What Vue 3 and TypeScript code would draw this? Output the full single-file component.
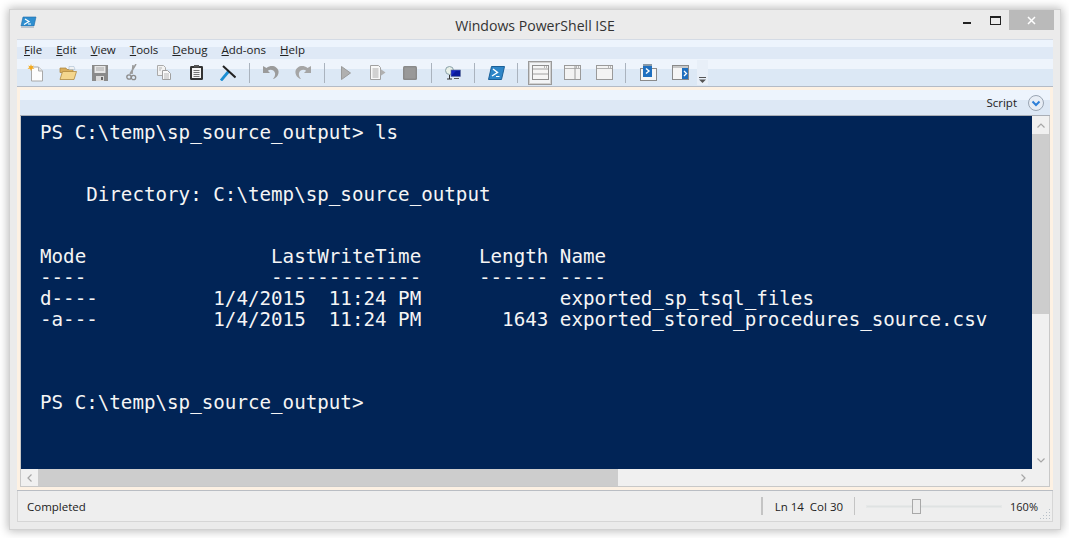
<script setup lang="ts">
const menus: { k: string; r: string }[] = [
  { k: 'F', r: 'ile' },
  { k: 'E', r: 'dit' },
  { k: 'V', r: 'iew' },
  { k: 'T', r: 'ools' },
  { k: 'D', r: 'ebug' },
  { k: 'A', r: 'dd-ons' },
  { k: 'H', r: 'elp' },
]
const consoleText = `PS C:\\temp\\sp_source_output> ls


    Directory: C:\\temp\\sp_source_output


Mode                LastWriteTime     Length Name
----                -------------     ------ ----
d----          1/4/2015  11:24 PM            exported_sp_tsql_files
-a---          1/4/2015  11:24 PM       1643 exported_stored_procedures_source.csv



PS C:\\temp\\sp_source_output>`
</script>

<template>
  <div class="page">
    <div class="window">
      <header class="titlebar">
        <svg class="app-icon" width="17" height="14" viewBox="0 0 17 14">
          <path d="M3 1h13l-2 9H1z" fill="#2f8fd0" stroke="#1c6aa8" stroke-width=".6" />
          <path d="M5 3l4 2.5-5 3" fill="none" stroke="#fff" stroke-width="1.2" />
          <path d="M8 8h3" stroke="#fff" />
          <rect x="1" y="10" width="13" height="2" fill="#b9c4cf" />
        </svg>
        <span class="title">Windows PowerShell ISE</span>
        <div class="caption">
          <span class="cap-btn"><i class="min"></i></span>
          <span class="cap-btn"><i class="max"></i></span>
          <span class="close">
            <svg width="9" height="9" viewBox="0 0 9 9"><path d="M1 1l7 7M8 1l-7 7" stroke="#fff" stroke-width="1.5" /></svg>
          </span>
        </div>
      </header>

      <div class="chrome">
        <nav class="menubar">
          <span v-for="m in menus" :key="m.k" class="menu"><u>{{ m.k }}</u>{{ m.r }}</span>
        </nav>

        <div class="toolbar">
          <span class="tb"><svg width="18" height="18" viewBox="0 0 18 18"><path d="M4.500 3h7l4 4v10h-11z" fill="#fdfdfd" stroke="#a8a8a8" /><path d="M11.500 3v4h4" fill="#e4e4e4" stroke="#b0b0b0" /><path d="M4 0l.8 2.200L7 1.500 5.600 3.300 7.500 4.800 5 4.800 4 7 3 4.800.5 4.800 2.400 3.300 1 1.500l2.200.7z" fill="#f4a91c" /></svg></span>
          <span class="tb"><svg width="18" height="16" viewBox="0 0 18 16"><path d="M1 3h6l1 1.500h6v3H1z" fill="#d9ae5c" stroke="#a9823a" stroke-width=".7" /><path d="M10 1.500l5 0 1 3h-6z" fill="#f2f2f2" stroke="#9cb4cc" stroke-width=".5" /><path d="M1 14.500l2.500-8h14l-2.500 8z" fill="#f4d68d" stroke="#b18a40" stroke-width=".8" /></svg></span>
          <span class="tb"><svg width="16" height="16" viewBox="0 0 16 16"><path d="M0 0h16v16H0z" fill="#8a8a8a" /><path d="M2.500 1h11v7h-11z" fill="#e6e6e6" /><path d="M4 3h8M4 5h8" stroke="#a8a8a8" /><path d="M4 11h8v5H4z" fill="#dadada" /><path d="M9 12h2v3H9z" fill="#666" /></svg></span>
          <span class="tb"><svg width="12" height="17" viewBox="0 0 12 17"><path d="M10 0L4 10M7 1l-1 9" stroke="#9a9a9a" stroke-width="1.500" fill="none" /><circle cx="3" cy="13" r="2.200" fill="none" stroke="#8a8a8a" stroke-width="1.300" /><circle cx="7.500" cy="13.500" r="2.200" fill="none" stroke="#8a8a8a" stroke-width="1.300" /></svg></span>
          <span class="tb"><svg width="14" height="15" viewBox="0 0 14 15"><path d="M.5.500h6l2 2v8h-8z" fill="#f2f2f2" stroke="#aaa" /><path d="M5.500 5.500h5l3 3v6h-8z" fill="#fafafa" stroke="#a0a0a0" /><path d="M7 9h5M7 11h5M7 13h5M2 3h3M2 5h2" stroke="#b5b5b5" /></svg></span>
          <span class="tb"><svg width="13" height="15" viewBox="0 0 13 15"><rect width="13" height="14" y="1" rx="1.200" fill="#333" /><rect x="2" y="3" width="9" height="10" fill="#f5f5f5" /><rect x="4" width="5" height="2.500" fill="#555" /><path d="M3.500 5.500h6M3.500 7.500h6M3.500 9.500h6M3.500 11.500h6" stroke="#777" /></svg></span>
          <span class="tb"><svg width="16" height="16" viewBox="0 0 16 16"><path d="M1 15.500L8.500 6.500" stroke="#1b8ed3" stroke-width="2.800" /><path d="M3 1L15.500 12.500" stroke="#222" stroke-width="2" /></svg></span>
          <i class="sep"></i>
          <span class="tb"><svg width="16" height="15" viewBox="0 0 16 15"><path d="M0 1v7h7L4.800 5.700C7 3.800 11 4.500 12 8c.5 2-.5 4.500-2 6 3.500-1 6-4.500 5.500-8C14.500 1.500 8.500-1 3.500 3z" fill="#9b9b9b" /></svg></span>
          <span class="tb"><svg width="16" height="15" viewBox="0 0 16 15"><path d="M16 1v7H9l2.200-2.300C9 3.800 5 4.500 4 8c-.5 2 .5 4.500 2 6C2.500 13 0 9.500.5 6 1.500 1.500 7.500-1 12.500 3z" fill="#a5a5a5" /></svg></span>
          <i class="sep"></i>
          <span class="tb"><svg width="10" height="14" viewBox="0 0 10 14"><path d="M.5.500l9 6.500-9 6.500z" fill="#b0b0b0" stroke="#9a9a9a" /></svg></span>
          <span class="tb"><svg width="16" height="15" viewBox="0 0 16 15"><path d="M.5.500h8l2 2v12H.5z" fill="#f8f8f8" stroke="#a0a0a0" /><path d="M2.500 4h6M2.500 6h6M2.500 8h6M2.500 10h6M2.500 12h6" stroke="#aaa" /><path d="M10.500 4l5 3.500-5 3.500z" fill="#b0b0b0" /></svg></span>
          <span class="tb"><svg width="14" height="14" viewBox="0 0 14 14"><rect width="14" height="14" rx="1.500" fill="#8a8a8a" /><rect x="1.500" y="1.500" width="11" height="11" fill="#999" /></svg></span>
          <i class="sep"></i>
          <span class="tb"><svg width="16" height="14" viewBox="0 0 16 14"><circle cx="4.500" cy="4.500" r="4" fill="#e8f0e8" stroke="#88a0a8" /><path d="M4.500 9v4M2 13h5" stroke="#333" /><rect x="6" y="4" width="9.500" height="6.500" fill="#1726c2" stroke="#60708a" stroke-width=".6" /><path d="M7 9l4-4h4v5H7z" fill="#0a1a9a" /><path d="M9 12.500h5" stroke="#555" /></svg></span>
          <i class="sep"></i>
          <span class="tb"><svg width="17" height="14" viewBox="0 0 17 14"><path d="M3.500.500h13l-3 13H.5z" fill="#2e86c8" stroke="#1b6098" /><path d="M5 3l4.500 3.500L4 10" fill="none" stroke="#fff" stroke-width="1.400" /><path d="M8 10.500h3.500" stroke="#fff" /></svg></span>
          <i class="sep"></i>
          <span class="tb active"><svg width="17" height="15" viewBox="0 0 17 15"><rect x=".5" y=".5" width="16" height="14" fill="#f5f5f5" stroke="#8f8f8f" /><path d="M1 4h15" stroke="#a0a0a0" /><path d="M1 9h15" stroke="#a0a0a0" /><path d="M12 2h1M14 2h1" stroke="#777" /></svg></span>
          <span class="tb"><svg width="17" height="15" viewBox="0 0 17 15"><rect x=".5" y=".5" width="16" height="14" fill="#f3f3f3" stroke="#9a9a9a" /><path d="M1 3.500h15" stroke="#b0b0b0" /><path d="M11 1v13" stroke="#9a9a9a" /><path d="M12 2h1M14 2h1" stroke="#777" /></svg></span>
          <span class="tb"><svg width="17" height="15" viewBox="0 0 17 15"><rect x=".5" y=".5" width="16" height="14" fill="#f3f3f3" stroke="#9a9a9a" /><path d="M1 3.500h15" stroke="#b0b0b0" /><path d="M12 2h1M14 2h1" stroke="#777" /></svg></span>
          <i class="sep"></i>
          <span class="tb"><svg width="17" height="17" viewBox="0 0 17 17"><rect x=".5" y="4.500" width="16" height="12" fill="#f5f5f5" stroke="#8a8a8a" /><rect x="3" y="0" width="9" height="13" fill="#1f6fbf" /><path d="M3 0h9v2H3z" fill="#8a9aa8" /><path d="M6 4.500l3 2.500-3 2.500" fill="none" stroke="#fff" stroke-width="1.400" /></svg></span>
          <span class="tb"><svg width="17" height="15" viewBox="0 0 17 15"><rect x=".5" y=".5" width="16" height="14" fill="#f5f5f5" stroke="#8a8a8a" /><rect x="10" y="3" width="6" height="11" fill="#1f6fbf" /><path d="M1 2h15" stroke="#9a9a9a" /><path d="M12 6l2.500 2.500L12 11" fill="none" stroke="#fff" stroke-width="1.300" /></svg></span>
          <span class="overflow"><svg width="7" height="6" viewBox="0 0 7 6"><path d="M0 .5h7" stroke="#555" /><path d="M0 2.500h7L3.500 6z" fill="#555" /></svg></span>
        </div>
      </div>

      <div class="workspace">
        <div class="panel-head">
          <span class="script-label">Script</span>
          <svg width="16" height="16" viewBox="0 0 16 16">
            <circle cx="8" cy="8" r="7.500" fill="#e7edf5" stroke="#9aa5b3" />
            <path d="M4.500 6.500L8 10l3.500-3.500" fill="none" stroke="#2d7fd8" stroke-width="2" />
          </svg>
        </div>
        <div class="console-grid">
          <pre class="console">{{ consoleText }}</pre>
          <div class="vscroll">
            <span class="sb-btn"><svg width="8" height="5" viewBox="0 0 8 5"><path d="M.5 4.500L4 1l3.500 3.500" fill="none" stroke="#a6a6a6" stroke-width="1.200" /></svg></span>
            <div class="vtrack"><div class="vthumb"></div></div>
            <span class="sb-btn"><svg width="8" height="5" viewBox="0 0 8 5"><path d="M.5.500L4 4 7.500.5" fill="none" stroke="#a6a6a6" stroke-width="1.200" /></svg></span>
          </div>
          <div class="hscroll">
            <span class="sb-btn h"><svg width="5" height="8" viewBox="0 0 5 8"><path d="M4.500.5L1 4l3.500 3.500" fill="none" stroke="#a6a6a6" stroke-width="1.200" /></svg></span>
            <div class="htrack"><div class="hthumb"></div></div>
            <span class="sb-btn h"><svg width="5" height="8" viewBox="0 0 5 8"><path d="M.5.500L4 4 .5 7.500" fill="none" stroke="#a6a6a6" stroke-width="1.200" /></svg></span>
          </div>
          <div class="corner"></div>
        </div>
      </div>

      <footer class="statusbar">
        <span class="status-text">Completed</span>
        <i class="status-sep"></i>
        <span class="pos">Ln 14&nbsp; Col 30</span>
        <i class="status-sep thin"></i>
        <div class="zoom-track"><span class="zoom-thumb"></span></div>
        <span class="pct">160%</span>
        <svg class="grip" width="11" height="11" viewBox="0 0 11 11" fill="#b8c0c8">
          <rect x="9" y="0" width="1" height="1" /><rect x="9" y="3" width="1" height="1" /><rect x="6" y="3" width="1" height="1" /><rect x="9" y="6" width="1" height="1" /><rect x="6" y="6" width="1" height="1" /><rect x="3" y="6" width="1" height="1" /><rect x="9" y="9" width="1" height="1" /><rect x="6" y="9" width="1" height="1" /><rect x="3" y="9" width="1" height="1" /><rect x="0" y="9" width="1" height="1" />
        </svg>
      </footer>
    </div>
  </div>
</template>

<style>
html, body { margin: 0; background: #fff; }
</style>

<style scoped>
.page {
  width: 1069px;
  height: 538px;
  padding: 9px 8px 8px 9px;
  box-sizing: border-box;
  overflow: hidden;
  font-family: "Open Sans", "Noto Sans", sans-serif;
  color: #222;
}
.window {
  height: 100%;
  box-sizing: border-box;
  display: flex;
  flex-direction: column;
  background: #ebebeb;
  border: 1px solid #d2d2d2;
  padding: 0 7px 7px;
  box-shadow: 0 0 9px 1px rgba(0, 0, 0, 0.28);
}
.titlebar {
  height: 29px;
  flex: none;
  display: flex;
  align-items: center;
  position: relative;
}
.app-icon { margin: 0 0 4px 3px; }
.title {
  position: absolute;
  left: 0;
  right: 0;
  top: 7px;
  text-align: center;
  font-size: 14.1px;
  line-height: 18px;
  color: #333;
}
.caption {
  margin-left: auto;
  margin-right: -1px;
  align-self: flex-start;
  display: flex;
}
.cap-btn {
  width: 28px;
  height: 20px;
  display: flex;
  align-items: center;
  justify-content: center;
}
.min { display: block; width: 8px; height: 2px; background: #222; margin-top: 6px; }
.max { display: block; width: 9px; height: 6px; border: 1px solid #222; border-top-width: 2px; }
.close {
  width: 45px;
  height: 20px;
  background: #bababa;
  display: flex;
  align-items: center;
  justify-content: center;
}
.chrome {
  flex: none;
  border-top: 1px solid #d4dbe5;
  border-bottom: 1px solid #b4bbc6;
}
.menubar {
  height: 19px;
  padding-left: 7px;
  display: flex;
  gap: 14px;
  align-items: center;
  font-size: 11.5px;
  color: #222;
  background: linear-gradient(#edf4fd 0 7px, #dfe9f6 7px);
}
.menu u { text-decoration-thickness: 1px; text-underline-offset: 1px; }
.toolbar {
  height: 27px;
  padding-left: 3px;
  display: flex;
  align-items: center;
  background: linear-gradient(#eef4fc 0 10px, #dce8f5 10px);
}
.tb {
  width: 32px;
  height: 24px;
  flex: none;
  box-sizing: border-box;
  display: flex;
  align-items: center;
  justify-content: center;
}
.tb.active {
  width: 24px;
  margin: 0 4px 0 5px;
  background: #f2f4f6;
  border: 1px solid #9a9a9a;
  box-shadow: inset 0 0 0 1px #d0d0d0;
}
.sep {
  width: 1px;
  height: 20px;
  flex: none;
  margin: 0 5px;
  background: #aab3be;
}
.tb + .sep + .tb.active + .tb + .tb + .sep { margin-right: 6px; }
.overflow {
  width: 11px;
  height: 25px;
  margin-left: 1px;
  box-sizing: border-box;
  padding-bottom: 2px;
  display: flex;
  align-items: flex-end;
  justify-content: center;
  background: #e8eff8;
}
.workspace {
  flex: 1;
  min-height: 0;
  display: flex;
  flex-direction: column;
  background: #fdf1e3;
  padding: 3px;
  border-bottom: 1px solid #b9bdc3;
}
.panel-head {
  height: 26px;
  flex: none;
  box-sizing: border-box;
  display: flex;
  align-items: center;
  justify-content: flex-end;
  gap: 11px;
  padding-right: 6px;
  border-bottom: 1px solid #a9aeb6;
  background: linear-gradient(#edf4fd 0 10px, #dde8f5 10px);
}
.script-label { font-size: 11.5px; color: #222; }
.console-grid {
  flex: 1;
  min-height: 0;
  display: grid;
  grid-template-columns: 1fr 17px;
  grid-template-rows: 1fr 17px;
  border: 1px solid #c8c8c8;
  border-top: 0;
}
.console {
  margin: 0;
  padding: 6.7px 0 0 19px;
  background: #012456;
  color: #f5f5f5;
  font-family: "DejaVu Sans Mono", monospace;
  font-size: 19.2px;
  line-height: 20.77px;
  overflow: hidden;
}
.vscroll {
  background: #f0f0f0;
  display: flex;
  flex-direction: column;
}
.sb-btn {
  height: 18px;
  flex: none;
  display: flex;
  align-items: center;
  justify-content: center;
}
.sb-btn.h { width: 17px; height: auto; }
.vtrack { flex: 1; }
.vthumb { height: 180px; background: #cdcdcd; }
.hscroll {
  background: #f0f0f0;
  display: flex;
}
.htrack { flex: 1; }
.hthumb { width: 580px; height: 100%; background: #cdcdcd; }
.corner { background: #f0f0f0; }
.statusbar {
  height: 31px;
  flex: none;
  display: flex;
  align-items: center;
  background: #eeeeee;
  border: 1px solid #d6d6d6;
  border-top: 0;
  box-sizing: border-box;
  font-size: 11.5px;
  position: relative;
}
.status-text { margin-left: 9px; margin-right: auto; }
.status-sep {
  width: 2px;
  height: 18px;
  background: #c4c4c4;
}
.status-sep.thin { width: 1px; }
.pos { margin: 0 11px 0 12px; }
.zoom-track {
  width: 136px;
  height: 3px;
  margin-left: 11px;
  background: #dfe2e2;
  border: 1px solid #e6e8e8;
  display: flex;
  align-items: center;
  box-sizing: border-box;
  padding-left: 45px;
}
.zoom-thumb {
  width: 9px;
  height: 15px;
  flex: none;
  background: #ececec;
  border: 1px solid #a8a8a8;
  box-sizing: border-box;
}
.pct { margin: 0 14px 0 8px; font-size: 11px; }
.grip { position: absolute; right: 1px; bottom: 1px; }
</style>
